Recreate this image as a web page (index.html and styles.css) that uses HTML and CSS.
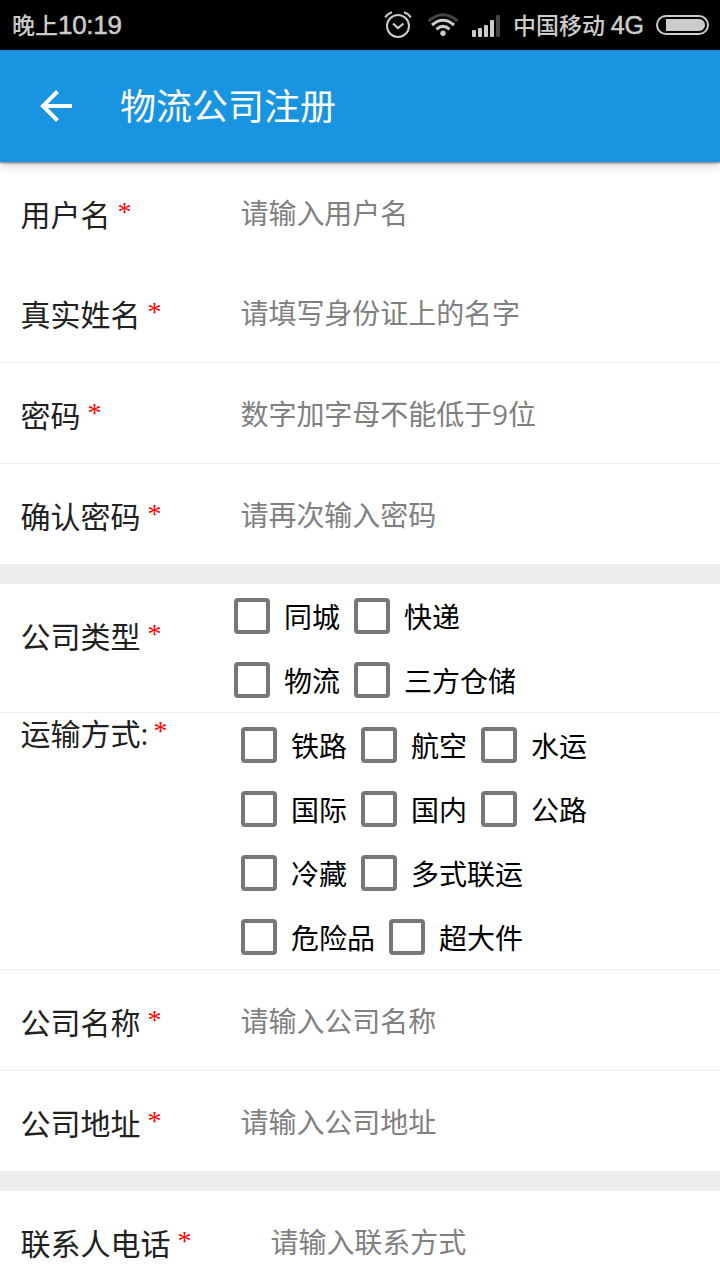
FILE: index.html
```html
<!DOCTYPE html>
<html lang="zh-CN">
<head>
    <meta charset="UTF-8">
    <meta name="viewport" content="width=device-width, initial-scale=1.0">
    <title>物流公司注册</title>
    <link rel="stylesheet" href="styles.css">
</head>
<body>
    <div class="status-bar">
        <span class="time">晚上<span class="clock">10:19</span></span>
        <div class="status-icons">
            <svg class="alarm" width="28" height="28" viewBox="0 0 28 28" fill="none" stroke="#ccc" stroke-width="2">
                <circle cx="14" cy="15" r="11"/>
                <path d="M9 12.500l5 4.500l5.500-4.500" stroke-width="2.200"/>
                <path d="M1.200 6.500Q3.500 2.700 8 1.300M20 1.300Q24.500 2.700 26.800 6.500"/>
            </svg>
            <svg class="wifi" width="32" height="24" viewBox="0 0 32 24" fill="none" stroke="#ccc" stroke-width="3">
                <path d="M1.500 8Q16-4.500 30.500 8" stroke="#444"/>
                <path d="M5 12Q16 2.500 27 12"/>
                <path d="M9.500 16.300Q16 10.500 22.500 16.300"/>
                <circle cx="16" cy="20.300" r="2.700" fill="#ccc" stroke="none"/>
            </svg>
            <svg class="signal" width="28" height="22" viewBox="0 0 28 22" fill="#ccc">
                <rect x="0" y="15" width="4" height="7" rx="1"/>
                <rect x="6" y="13" width="4" height="9" rx="1"/>
                <rect x="12" y="10" width="4" height="12" rx="1"/>
                <rect x="18" y="5" width="4" height="17" rx="1"/>
                <rect x="24" y="0" width="4" height="22" rx="1" fill="#444"/>
            </svg>
            <span class="carrier">中国移动 <span class="net">4G</span></span>
            <svg class="battery" width="53" height="20" viewBox="0 0 53 20">
                <rect x="1" y="1" width="51" height="18" rx="9" fill="none" stroke="#ccc" stroke-width="2"/>
                <path d="M10 4H43a6 6 0 0 1 0 12H10z" fill="#ccc"/>
            </svg>
        </div>
    </div>

    <header class="app-bar">
        <svg class="back" width="32" height="32" viewBox="0 0 32 32" fill="none" stroke="#fff" stroke-width="4">
            <path d="M32 16H3M17.500 1.500L3 16l14.500 14.500"/>
        </svg>
        <h1>物流公司注册</h1>
    </header>

    <form>
        <div class="row first">
            <label>用户名<i>*</i></label>
            <input type="text" placeholder="请输入用户名">
        </div>
        <div class="row line">
            <label>真实姓名<i>*</i></label>
            <input type="text" placeholder="请填写身份证上的名字">
        </div>
        <div class="row line">
            <label>密码<i>*</i></label>
            <input type="password" placeholder="数字加字母不能低于9位">
        </div>
        <div class="row">
            <label>确认密码<i>*</i></label>
            <input type="password" placeholder="请再次输入密码">
        </div>

        <div class="divider"></div>

        <div class="row checks type line">
            <label>公司类型<i>*</i></label>
            <div class="options">
                <div class="option-row">
                    <label class="check"><input type="checkbox"><span>同城</span></label>
                    <label class="check"><input type="checkbox"><span>快递</span></label>
                </div>
                <div class="option-row">
                    <label class="check"><input type="checkbox"><span>物流</span></label>
                    <label class="check"><input type="checkbox"><span>三方仓储</span></label>
                </div>
            </div>
        </div>
        <div class="row checks transport line">
            <label>运输方式:<i>*</i></label>
            <div class="options">
                <div class="option-row">
                    <label class="check"><input type="checkbox"><span>铁路</span></label>
                    <label class="check"><input type="checkbox"><span>航空</span></label>
                    <label class="check"><input type="checkbox"><span>水运</span></label>
                </div>
                <div class="option-row">
                    <label class="check"><input type="checkbox"><span>国际</span></label>
                    <label class="check"><input type="checkbox"><span>国内</span></label>
                    <label class="check"><input type="checkbox"><span>公路</span></label>
                </div>
                <div class="option-row">
                    <label class="check"><input type="checkbox"><span>冷藏</span></label>
                    <label class="check"><input type="checkbox"><span>多式联运</span></label>
                </div>
                <div class="option-row">
                    <label class="check"><input type="checkbox"><span>危险品</span></label>
                    <label class="check"><input type="checkbox"><span>超大件</span></label>
                </div>
            </div>
        </div>
        <div class="row line">
            <label>公司名称<i>*</i></label>
            <input type="text" placeholder="请输入公司名称">
        </div>
        <div class="row">
            <label>公司地址<i>*</i></label>
            <input type="text" placeholder="请输入公司地址">
        </div>

        <div class="divider"></div>

        <div class="row phone">
            <label>联系人电话<i>*</i></label>
            <input type="tel" placeholder="请输入联系方式">
        </div>
    </form>
</body>
</html>
```
FILE: styles.css
```css
* {
    box-sizing: border-box;
}
body {
    margin: 0;
    height: 1280px;
    overflow: hidden;
    background: #fff;
    color: #212121;
    font-family: "Open Sans", "Noto Sans CJK SC", sans-serif;
}
.status-bar {
    display: flex;
    justify-content: space-between;
    align-items: center;
    height: 50px;
    padding: 0 11px 0 12px;
    background: #000;
    color: #ccc;
    font-family: Roboto, "Noto Sans CJK SC", sans-serif;
    font-size: 23px;
    font-weight: 500;
}
.time {
    padding-bottom: 3px;
}
.clock, .net {
    font-family: "Liberation Sans", sans-serif;
    font-size: 26px;
    -webkit-text-stroke: 0.5px #ccc;
}
.clock { letter-spacing: -0.3px; }
.net { font-size: 25px; }
.status-icons {
    display: flex;
    align-items: center;
}
.wifi { margin-left: 15px; }
.signal { margin: 2px 13px 0 13px; }
.carrier { padding-bottom: 3px; }
.battery { margin-left: 12px; }

.app-bar {
    position: relative;
    display: flex;
    align-items: center;
    height: 112px;
    padding-left: 40px;
    background: #1994e0;
    color: #fff;
    box-shadow: 0 1px 2px rgba(0, 0, 0, 0.5), 0 3px 10px rgba(0, 0, 0, 0.2);
}
h1 {
    margin: 1px 0 0 48px;
    font-size: 36px;
    font-weight: 400;
    line-height: 50px;
}

.row {
    display: flex;
    align-items: center;
    height: 100px;
    padding-left: 20px;
}
.line {
    height: 101px;
    border-bottom: 1px solid #ededed;
}
.row > label {
    width: 220px;
    padding-top: 6px;
    font-size: 30px;
    line-height: 40px;
    text-indent: 0.5px;
    white-space: nowrap;
}
.row i {
    margin-left: 7px;
    color: #f00;
    font-family: "Liberation Serif", serif;
    font-size: 28px;
    font-style: normal;
    line-height: 1;
    vertical-align: 5px;
}
.row > input {
    flex: 1;
    min-width: 0;
    height: 60px;
    padding: 2px 0 0;
    border: none;
    outline: none;
    background: none;
    font: 28px "Open Sans", "Noto Sans CJK SC", sans-serif;
    letter-spacing: -0.050px;
    text-indent: 0.5px;
}
.row > input::placeholder { color: #808080; }
.phone > label { width: 250px; }
.divider {
    height: 20px;
    background: #ededed;
}

/* checkbox groups */
.checks { height: auto; }
.row.type > label {
    width: 200px;
    padding: 0 0 22px;
}
.transport { align-items: flex-start; }
.row.transport > label {
    width: 207px;
    padding-top: 1px;
}
.transport > label i { margin-left: 5px; }
.option-row {
    display: flex;
    height: 64px;
}
.check {
    display: flex;
    align-items: center;
    color: #000;
    font-size: 28px;
    line-height: 40px;
}
.check span { padding-top: 2px; }
.check input {
    appearance: none;
    width: 36px;
    height: 36px;
    margin: 0 14px;
    border: 4px solid #777;
    border-radius: 4px;
}
```
